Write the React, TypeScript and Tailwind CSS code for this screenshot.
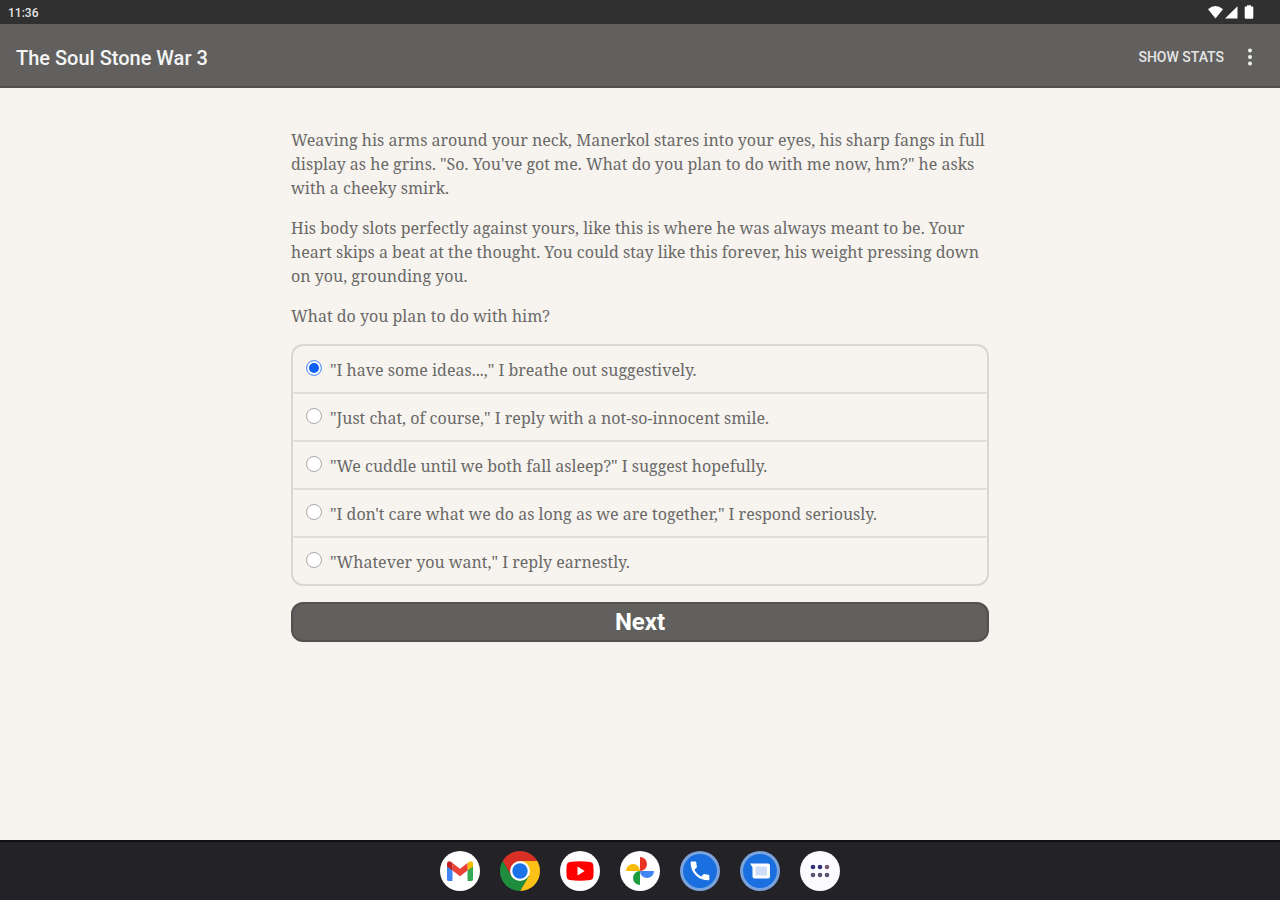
import { useState } from 'react'

const paragraphs = [
  'Weaving his arms around your neck, Manerkol stares into your eyes, his sharp fangs in full display as he grins. "So. You\'ve got me. What do you plan to do with me now, hm?" he asks with a cheeky smirk.',
  'His body slots perfectly against yours, like this is where he was always meant to be. Your heart skips a beat at the thought. You could stay like this forever, his weight pressing down on you, grounding you.',
]

const choices = [
  '"I have some ideas...," I breathe out suggestively.',
  '"Just chat, of course," I reply with a not-so-innocent smile.',
  '"We cuddle until we both fall asleep?" I suggest hopefully.',
  '"I don\'t care what we do as long as we are together," I respond seriously.',
  '"Whatever you want," I reply earnestly.',
]

function StatusBar() {
  return (
    <div className="h-6 pl-2 pr-6 flex items-center justify-between bg-[#303030] text-[#e4e4e4]">
      <span className="pt-0.5 text-xs font-medium">11:36</span>
      <svg className="w-12 h-4" viewBox="0 0 48 16" fill="#ffffff" aria-hidden="true">
        <path d="M0 5.2Q7.5 -1.2 15 5.2L7.5 14.5Z" />
        <path d="M29.5 2.3V14.5H17Z" />
        <path d="M37.5 2.5H39V1.3H43V2.5H44.500Q45.3 2.5 45.3 3.5V13.500Q45.3 14.8 44 14.8H38Q36.7 14.8 36.7 13.5V3.5Q36.7 2.5 37.5 2.5Z" />
      </svg>
    </div>
  )
}

function AppBar() {
  return (
    <header className="h-16 pl-4 pr-5 flex items-center justify-between bg-[#61605e] border-b-2 border-[#504f4e]">
      <h1 className="pt-1.5 text-xl font-medium text-[#f4f4f4]">The Soul Stone War 3</h1>
      <div className="pt-1 flex items-center gap-4">
        <button className="text-sm font-medium text-[#e6e6e6]">SHOW STATS</button>
        <button aria-label="More options" className="w-5 h-6 flex items-center justify-center">
          <svg className="w-1 h-5" viewBox="0 0 4 20" fill="#f0f0f0">
            <circle cx="2" cy="3.5" r="2" />
            <circle cx="2" cy="10" r="2" />
            <circle cx="2" cy="16.5" r="2" />
          </svg>
        </button>
      </div>
    </header>
  )
}

function GmailIcon() {
  return (
    <svg className="size-10" viewBox="0 0 40 40">
      <circle cx="20" cy="20" r="20" fill="#fff" />
      <path d="M7 13v15.5q0 1.5 1.5 1.5H12.5V16.5Z" fill="#4285f4" />
      <path d="M27.5 16.5V30h4q1.5 0 1.5-1.5V13Z" fill="#34a853" />
      <path d="M27.5 12v7.5L33 15.4V13q0-3.5-3.3-2.6Z" fill="#fbbc04" />
      <path d="M12.5 19.5V12L20 17.8 27.5 12v7.5L20 25.2Z" fill="#ea4335" />
      <path d="M7 13v2.4l5.5 4.1V12l-1.6-1.2Q7 9 7 13Z" fill="#c5221f" />
    </svg>
  )
}

function ChromeIcon() {
  return (
    <svg className="size-10" viewBox="0 0 40 40">
      <path d="M11.34 25L2.7 10A20 20 0 0 1 37.3 10H20Z" fill="#d93025" />
      <path d="M37.3 10A20 20 0 0 1 20 40L28.66 25 20 10Z" fill="#fbc116" />
      <path d="M2.7 10A20 20 0 0 0 20 40L28.66 25H11.34Z" fill="#1e8e3e" />
      <circle cx="20" cy="20" r="10" fill="#fff" />
      <circle cx="20" cy="20" r="7.7" fill="#1a73e8" />
    </svg>
  )
}

function YouTubeIcon() {
  return (
    <svg className="size-10" viewBox="0 0 40 40">
      <circle cx="20" cy="20" r="20" fill="#fff" />
      <path d="M9.5 11Q20 9.5 30.5 11 33 11.3 33.3 14 34 20 33.3 26 33 28.7 30.5 29 20 30.5 9.5 29 7 28.7 6.7 26 6 20 6.7 14 7 11.3 9.5 11Z" fill="#ff0000" />
      <path d="M17.5 15.5v9l7.2-4.5Z" fill="#fff" />
    </svg>
  )
}

function PhotosIcon() {
  return (
    <svg className="size-10" viewBox="0 0 40 40">
      <circle cx="20" cy="20" r="20" fill="#fff" />
      <path d="M20 6a7 7 0 0 1 0 14Z" fill="#ea3323" />
      <path d="M34 20a7 7 0 0 1-14 0Z" fill="#4285f4" />
      <path d="M20 34a7 7 0 0 1 0-14Z" fill="#1e9e40" />
      <path d="M6 20a7 7 0 0 1 14 0Z" fill="#fbbc04" />
    </svg>
  )
}

function PhoneIcon() {
  return (
    <svg className="size-10" viewBox="0 0 40 40">
      <circle cx="20" cy="20" r="20" fill="#7ba3dc" />
      <circle cx="20" cy="20" r="17" fill="#1a6fe0" />
      <path
        transform="translate(7.5 7.5) scale(1.04)"
        d="M6.620 10.790c1.440 2.830 3.760 5.140 6.590 6.590l2.200-2.200c.27-.27.67-.36 1.020-.24 1.120.37 2.330.57 3.570.57.55 0 1 .45 1 1V20c0 .55-.45 1-1 1-9.390 0-17-7.610-17-17 0-.55.45-1 1-1h3.500c.55 0 1 .45 1 1 0 1.250.2 2.450.57 3.570.11.35.03.74-.25 1.020l-2.200 2.200z"
        fill="#fff"
      />
    </svg>
  )
}

function MessagesIcon() {
  return (
    <svg className="size-10" viewBox="0 0 40 40">
      <circle cx="20" cy="20" r="20" fill="#7ba3dc" />
      <circle cx="20" cy="20" r="17" fill="#1a6fe0" />
      <path d="M10 12.5H28Q30 12.5 30 14.5V25.5Q30 27.5 28 27.5H14.5Q12.5 27.5 12.5 25.5V16.5Z" fill="#fff" />
      <path d="M15.5 15.5H27V24.5H15.5Z" fill="#cfdcf8" />
    </svg>
  )
}

function AllAppsIcon() {
  return (
    <svg className="size-10" viewBox="0 0 40 40">
      <circle cx="20" cy="20" r="20" fill="#fbfaff" />
      <g fill="#33307a">
        <circle cx="13" cy="16" r="2.3" />
        <circle cx="20" cy="16" r="2.3" />
        <circle cx="27" cy="16" r="2.3" fill="#7c5573" />
      </g>
      <g fill="#57566f">
        <circle cx="13" cy="24" r="2.3" />
        <circle cx="20" cy="24" r="2.3" />
        <circle cx="27" cy="24" r="2.3" />
      </g>
    </svg>
  )
}

const apps = [
  { name: 'Gmail', Icon: GmailIcon },
  { name: 'Chrome', Icon: ChromeIcon },
  { name: 'YouTube', Icon: YouTubeIcon },
  { name: 'Photos', Icon: PhotosIcon },
  { name: 'Phone', Icon: PhoneIcon },
  { name: 'Messages', Icon: MessagesIcon },
  { name: 'All apps', Icon: AllAppsIcon },
]

export default function App() {
  const [selected, setSelected] = useState(0)

  return (
    <div className="min-h-screen flex flex-col bg-[#f7f4f0] font-['Roboto',sans-serif]">
      <StatusBar />
      <AppBar />
      <main className="flex-1 w-full max-w-[698px] mx-auto pt-10 pb-8 font-['Noto_Serif','DejaVu_Serif_Condensed','DejaVu_Serif',serif] text-base leading-6 text-[#6a6967]">
        <div className="space-y-4">
          {paragraphs.map((text) => (
            <p key={text}>{text}</p>
          ))}
          <p id="question">What do you plan to do with him?</p>
        </div>
        <form onSubmit={(e) => e.preventDefault()}>
          <div
            role="radiogroup"
            aria-labelledby="question"
            className="mt-4 border-2 border-[#d9d7d4] rounded-xl divide-y-2 divide-[#dfddda]"
          >
            {choices.map((choice, i) => (
              <label key={choice} className="flex items-center gap-2 px-[13px] pt-3 pb-2.5">
                <input
                  type="radio"
                  name="choice"
                  checked={selected === i}
                  onChange={() => setSelected(i)}
                  className="appearance-none size-4 shrink-0 mb-1 rounded-full border border-[#a9a9a9] bg-white checked:border-[#6c9ffb] checked:bg-[#0b5ff5] checked:shadow-[inset_0_0_0_2px_#ffffff]"
                />
                <span>{choice}</span>
              </label>
            ))}
          </div>
          <button
            type="submit"
            className="mt-4 w-full h-10 rounded-xl bg-[#61605e] border-2 border-[#525150] font-['Roboto',sans-serif] text-2xl leading-9 font-bold text-white"
          >
            Next
          </button>
        </form>
      </main>
      <nav className="h-15 flex items-center justify-center gap-5 bg-[#232327] border-t-2 border-[#111113]" aria-label="Dock">
        {apps.map(({ name, Icon }) => (
          <button key={name} aria-label={name}>
            <Icon />
          </button>
        ))}
      </nav>
    </div>
  )
}
